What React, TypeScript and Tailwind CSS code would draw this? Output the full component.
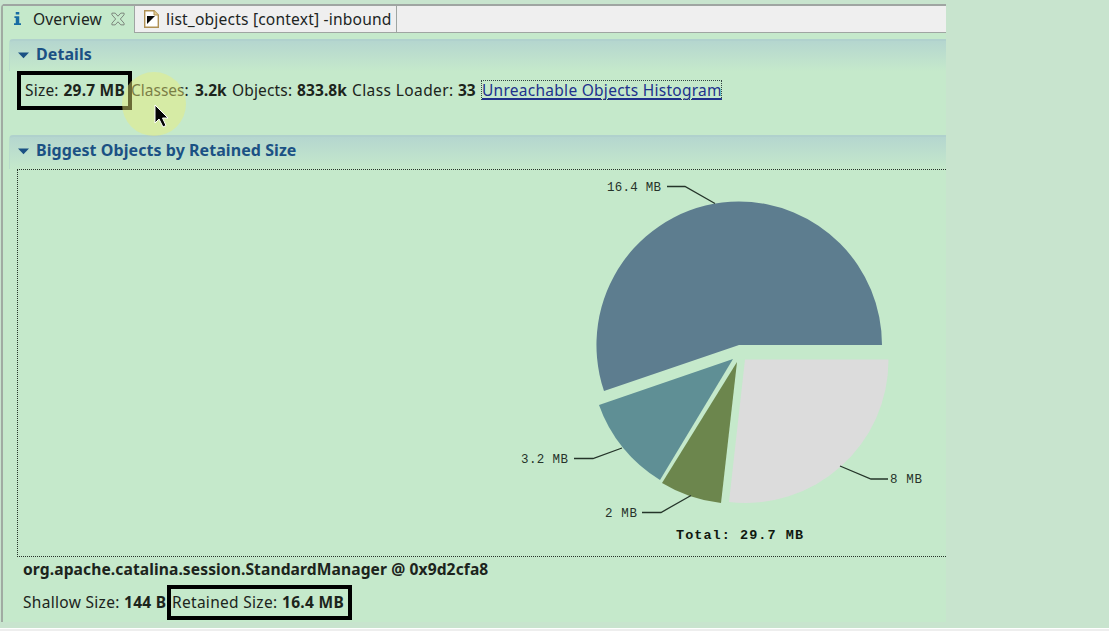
import type { ReactNode } from "react";

function SectionHeader({ title, className }: { title: ReactNode; className: string }) {
  return (
    <div className={`ml-[9px] flex shrink-0 rounded-tl-[4px] border-t-2 border-l border-t-[#b0d1cd] border-l-[#b9dccb] bg-linear-to-b from-[#b5d6cf] to-[#c5e9cb] pl-[8px] ${className}`}>
      <svg className="mt-[11px] h-[7px] w-[11px]" viewBox="0 0 11 7">
        <path d="M0 0.5H11L5.5 6.2Z" fill="#1b5184" />
      </svg>
      <h2 className="pl-[7px] text-[16px] leading-[27px] font-bold tracking-[0.06px] text-[#1b5184]">{title}</h2>
    </div>
  );
}

function TabBar() {
  return (
    <div className="flex h-[29px] shrink-0 border-t-2 border-[#9fa5a2] bg-[#c5e9cb] leading-[27px] text-[#20251f]">
      <div className="flex w-[131px] shrink-0 items-start pl-[11px]">
        <svg className="mt-[5px] h-[15px] w-[7px]" viewBox="0 0 8 17">
          <path d="M2 1H6V4H2ZM0.5 6H6V14H8V16H0V14H2V8H0.5Z" fill="#176ca3" />
        </svg>
        <span className="ml-[12px] w-[70px] text-[15.6px] tracking-[0.1px] whitespace-nowrap">Overview</span>
        <svg className="ml-[8px] mt-[6px] h-[14px] w-[14px]" viewBox="0 0 15 14" fill="none" stroke="#777f77">
          <path d="M1 0.7H4.5L7.5 4L10.5 0.7H14V2.5L10 7L14 11.5V13.3H10.5L7.5 10L4.5 13.3H1V11.5L5 7L1 2.5Z" />
        </svg>
      </div>
      <div className="flex w-[263px] shrink-0 border-x border-b border-[#9fa5a2] bg-[#efefef] pl-[9px]">
        <svg className="mt-[4px] h-[18px] w-[15px]" viewBox="0 0 15 18">
          <path d="M0.7 0.7H10L14.3 5V17.3H0.7Z" fill="#fff" stroke="#b09154" strokeWidth="1.4" />
          <path d="M10 0.7V5H14.3" fill="#e4cf96" stroke="#b09154" />
          <path d="M3 6H11L3 14Z" fill="#080808" />
        </svg>
        <span className="ml-[7px] text-[15.6px] tracking-[0.18px] whitespace-nowrap">list_objects [context] -inbound</span>
      </div>
      <div className="grow border-b border-[#9fa5a2] bg-[#efefef]" />
    </div>
  );
}

function PieChart() {
  return (
    <svg className="block h-[386px] w-[928px]" viewBox="18 170 928 386">
      <path d="M739 345H882A143 143.500 0 0 0 739 201.500A143 143.500 0 0 0 604 391Z" fill="#5d7d8f" />
      <path d="M733 359L599 405A143 143 0 0 0 660 480Z" fill="#5f8f95" />
      <path d="M737 362L662 483A143 143 0 0 0 721 503Z" fill="#6c864d" />
      <path d="M745 359.500H888.500A143 143 0 0 1 729 502Z" fill="#dcdcdc" />
      <g fill="none" stroke="#25352a" strokeWidth="1.3">
        <path d="M667 186.500H685L715 203.500" />
        <path d="M574 458.500H593L622 448" />
        <path d="M642 512.500H661L691 495.500" />
        <path d="M840 466L871 479H888" />
      </g>
      <g className="font-['Liberation_Mono',monospace] text-[12.5px]" fill="#26332a">
        <text x="607" y="191" textLength="54">16.4 MB</text>
        <text x="521" y="463" textLength="47">3.2 MB</text>
        <text x="605" y="517" textLength="32">2 MB</text>
        <text x="890" y="483" textLength="32">8 MB</text>
      </g>
      <text x="676" y="539" textLength="127" className="font-['Liberation_Mono',monospace] text-[13.5px] font-bold" fill="#10180f">Total: 29.7 MB</text>
    </svg>
  );
}

export default function App() {
  return (
    <div className="flex h-[631px] w-[1109px] flex-col overflow-hidden bg-[#c8e4ce] font-['Noto_Sans',sans-serif]">
      <div className="h-[4px] shrink-0" />
      <main className="ml-[1px] flex h-[618px] w-[945px] shrink-0 flex-col rounded-tl-[4px] border-l-2 border-[#a0aba2] bg-[#c5e9cb] text-[#1c241c]">
        <TabBar />
        <div className="-ml-[3px] flex flex-col">
          <SectionHeader title="Details" className="mt-[6px] h-[32px]" />
          <div className="relative flex h-[64px] text-[15.5px] leading-[22px] whitespace-nowrap">
            <div className="ml-[17px] flex h-[39px] w-[115px] shrink-0 border-4 border-black pl-[4px] pt-[4px]">
              <span className="w-[38.500px] tracking-[0.2px]">Size:</span><b className="tracking-[0.22px]">29.7 MB</b>
            </div>
            <div className="-ml-px flex pt-[8px]">
              <span className="w-[64px]">Classes:</span><b className="w-[37px]">3.2k</b>
              <span className="w-[65px] tracking-[0.15px]">Objects:</span><b className="w-[55px] tracking-[0.1px]">833.8k</b>
              <span className="w-[106px] tracking-[0.4px]">Class Loader:</span><b className="w-[23px]">33</b>
              <a className="mt-px h-[20px] w-[241px] border border-dotted border-[#344] leading-[19px] tracking-[0.27px] text-[#20318b] underline decoration-2 underline-offset-2">Unreachable Objects Histogram</a>
            </div>
            <div className="absolute top-[1px] left-[122px] size-[64px] rounded-full bg-[#eced78]/45" />
            <svg className="absolute top-[33px] left-[154px] h-[25px] w-[15px]" viewBox="0 0 15 25">
              <path d="M1 1V19L5 15L9 23L12 21.500L8.500 14H14Z" fill="#050505" stroke="#fff" strokeWidth="1" />
            </svg>
          </div>
          <SectionHeader title="Biggest Objects by Retained Size" className="h-[34px]" />
          <div className="ml-[17px] h-[388px] border-y border-l border-dotted border-[#26332a]">
            <PieChart />
          </div>
          <div className="pl-[23px] pt-px pb-px text-[15.6px] leading-[22px] font-bold tracking-[0.1px]">org.apache.catalina.session.StandardManager @ 0x9d2cfa8</div>
          <div className="flex pt-[4px] pl-[23px] text-[15.5px] leading-[22px] whitespace-nowrap">
            <span className="mt-[6px] w-[101px] tracking-[0.3px]">Shallow Size:</span><b className="mt-[6px] w-[43px] tracking-[0.3px]">144 B</b>
            <div className="flex h-[35px] w-[185px] border-4 border-black pt-[2px] pl-px">
              <span className="w-[110px] tracking-[0.3px]">Retained Size:</span><b className="tracking-[0.3px]">16.4 MB</b>
            </div>
          </div>
        </div>
      </main>
      <div className="mt-[6px] h-[3px] shrink-0 border-t border-white bg-[#eeeeee]" />
    </div>
  );
}
